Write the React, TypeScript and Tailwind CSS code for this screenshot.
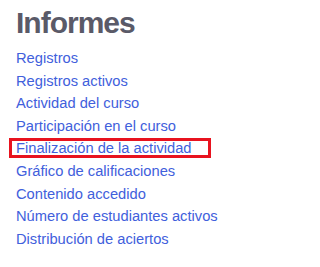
const links = [
  "Registros",
  "Registros activos",
  "Actividad del curso",
  "Participación en el curso",
  "Finalización de la actividad",
  "Gráfico de calificaciones",
  "Contenido accedido",
  "Número de estudiantes activos",
  "Distribución de aciertos",
];

export default function App() {
  return (
    <div className="w-[227px] h-[267px] bg-white pl-4 pt-[4px] font-['Liberation_Sans',Arial,sans-serif]">
      <h2 className="text-[30px] leading-[38px] font-bold text-[#5a5a68] tracking-[-1px]">
        Informes
      </h2>
      <ul className="mt-[5px] flex flex-col">
        {links.map((l, i) => (
          <li key={l} className="relative h-[22.6px]">
            <a
              href="#"
              className="block text-[14.7px] leading-[22.6px] text-[#4160dc]"
            >
              {l}
            </a>
            {i === 4 && (
              <span className="absolute left-[-7px] top-[1px] w-[202px] h-[20px] border-[3px] border-[#e8131f]" />
            )}
          </li>
        ))}
      </ul>
    </div>
  );
}
